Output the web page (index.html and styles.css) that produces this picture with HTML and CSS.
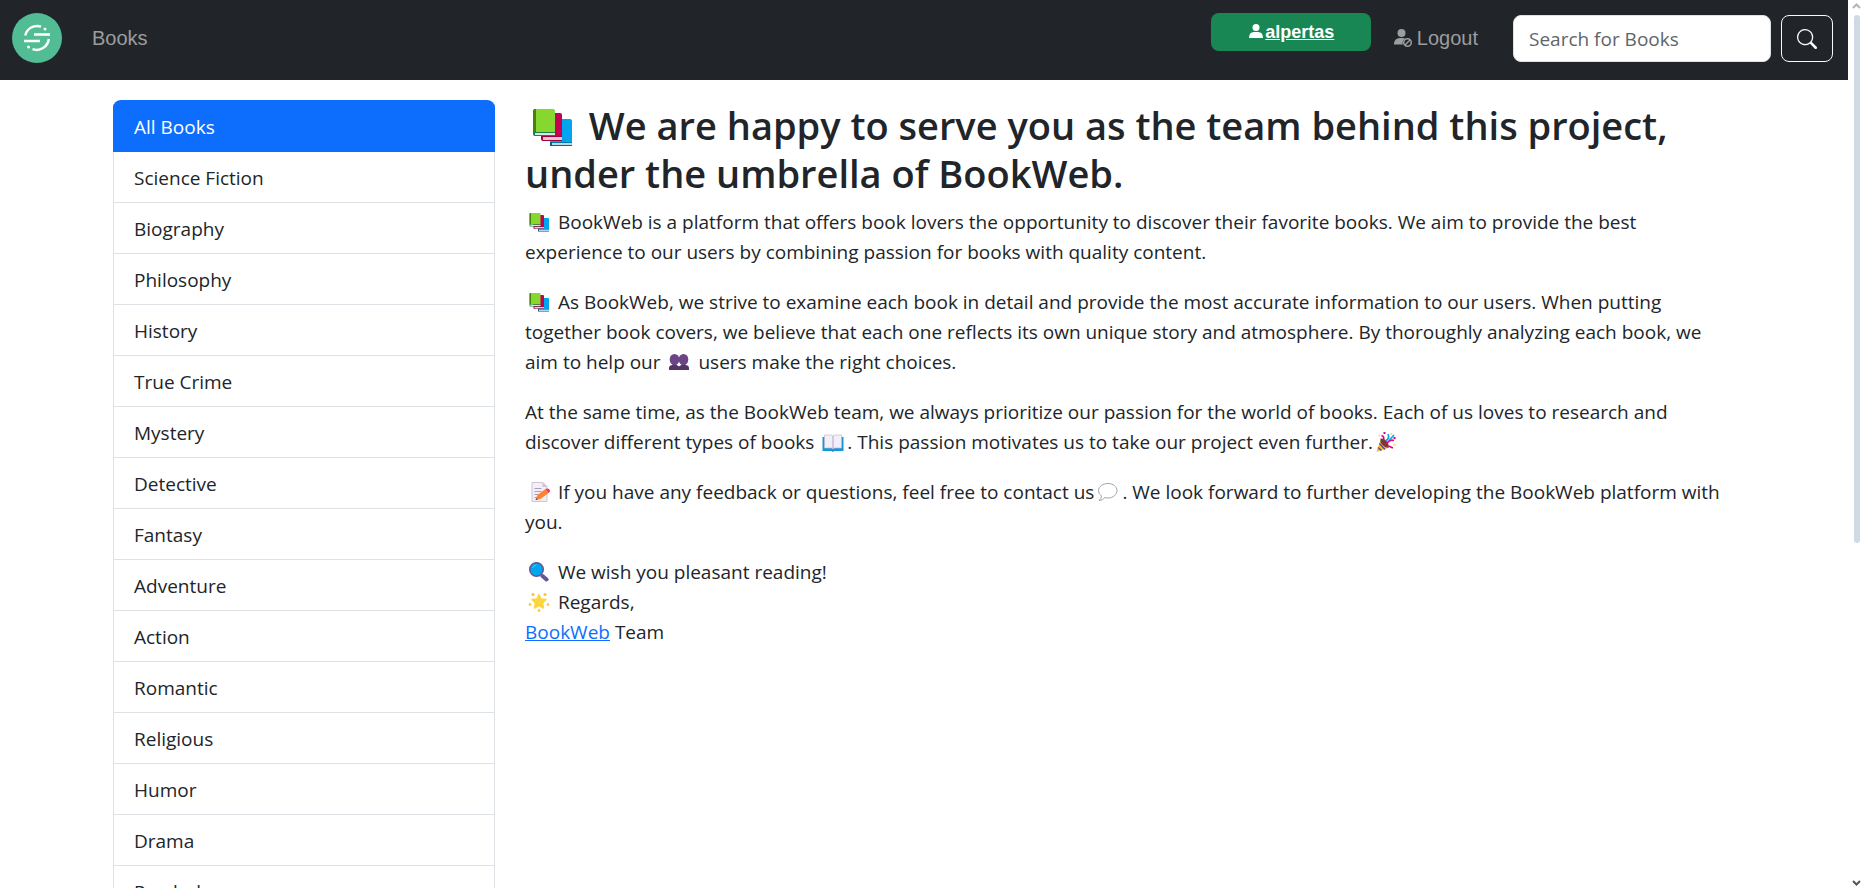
FILE: index.html
```html
<!DOCTYPE html>
<html lang="en">
<head>
<meta charset="utf-8">
<title>BookWeb</title>
<link rel="stylesheet" href="styles.css">
</head>
<body>
<svg class="defs" aria-hidden="true">
  <symbol id="books" viewBox="0 0 54 40">
    <path fill="#0078b8" d="M25 14h3v24h-3z"/><path fill="#00a4ef" d="M27 12h18q2 0 2 2v21H25V14q0-2 2-2z"/>
    <path fill="#0078a8" d="M25 35h22v1H25z"/><path fill="#b8d8e8" d="M27 36h20v3H27z"/><path fill="#0063a0" d="M25 35h2v4h-2zM27 38h20v1H27z"/>
    <path fill="#c30052" d="M18 6h17q2 0 2 2v22H16V8q0-2 2-2z"/><path fill="#e3c6d4" d="M18 30h19v3H18z"/><path fill="#a4003f" d="M16 29h21v1H16zM16 30h2v3h19v1H18q-2 0-2-2z"/>
    <path fill="#86d72f" d="M10 2h18q2 0 2 2v21H8V4q0-2 2-2z"/><path fill="#498205" d="M9 2h2v23H8V4z"/><path fill="#d5eadb" d="M10 26h20v2H10z"/><path fill="#1b7d50" d="M8 25h22v1H10v2h20v1H10q-2 0-2-2z"/>
  </symbol>
  <symbol id="users" viewBox="0 0 27 20">
    <g fill="#6b4588"><ellipse cx="9" cy="7.500" rx="4.800" ry="5.600"/><ellipse cx="18" cy="7.500" rx="4.800" ry="5.600"/><path d="M7 10h4v5H7zM16 10h4v5h-4z"/></g>
    <path fill="#533566" d="M3.500 18v-2q0-3 4-3h3q2 0 3 1.500 1-1.500 3-1.500h3q4 0 4 3v2z"/>
  </symbol>
  <symbol id="open-book" viewBox="0 0 27 20">
    <path fill="#1597d8" d="M3 5h21v14H15l-1.500 1L12 19H3z"/><path fill="#f3eef8" stroke="#c5b8cf" stroke-width=".7" d="M5 3h7l1.500 1L15 3h7v13h-7l-1.500 1-1.500-1H5z"/><path stroke="#b4a5c0" d="M13.500 4v13"/>
  </symbol>
  <symbol id="party" viewBox="0 0 27 20">
    <path fill="#fcb831" d="M6.500 9l8 7L3 20z"/><path stroke="#5b4fa0" stroke-width="1.600" d="M6 11.500l5.500 6M4.500 15.500l3.500 3"/><path fill="#7a3b2e" d="M7 6.500q4-.5 6.500 3t1.500 6.500q-4-.5-6.500-3.500T7 6.500z"/>
    <g fill="none" stroke="#e3008c" stroke-width="1.700"><path d="M10 7.500q1-3-2-4M13.500 11q3-4 7-2.500M15 14l4.500 2"/></g><path fill="none" stroke="#18a8e0" stroke-width="1.800" d="M12.500 8.500q4-2 2-6.500M16 8l4.500-5"/>
    <path fill="#fcd53f" d="M17 1h1.500v1.500H17zM20 12h2v1.500h-2zM5 3h1.500v1.500H5z"/><path fill="#e3008c" d="M20 5h2v2h-2zM10 0h2v2h-2z"/>
  </symbol>
  <symbol id="memo" viewBox="0 0 27 20">
    <path fill="#f3eef8" stroke="#cdc4d6" d="M6.500.5h11l4 4v15h-15z"/><path fill="#cdc4d6" d="M17 0l5 5h-5z"/><path stroke="#aba0ba" d="M9 6.500h7M9 9.500h7M9 12.500h5M9 15.500h3"/>
    <path fill="#ff822d" d="M10 18l2-5 8-6 3 4-8 6z"/><path fill="#f92f60" d="M20 7l1.500-.5q3 0 3 3L23 11z"/><path fill="#7d4533" d="M10 18l1-2 1.500 1.500z"/>
  </symbol>
  <symbol id="speech" viewBox="0 0 27 20">
    <path fill="#fff" stroke="#999" stroke-width=".9" d="M13.500 1.500c5 0 9 3 9 7s-4 7.500-9 7.500q-1.500 0-3-.5Q8 18.500 4.500 18.500 7 16.500 7 14q-3-2-3-5.500c0-4 4.500-7 9.500-7z"/>
  </symbol>
  <symbol id="magnifier" viewBox="0 0 27 20">
    <path stroke="#635994" stroke-width="4" stroke-linecap="round" d="M17 14l4 3.500"/><circle cx="11" cy="7.500" r="6.800" fill="#00a6ed" stroke="#635994" stroke-width="1.500"/><path fill="none" stroke="#45c8ff" d="M7 6q1-3 4-3"/>
  </symbol>
  <symbol id="star" viewBox="0 0 27 20">
    <path fill="#fcd53f" stroke="#fcd53f" stroke-width="1.500" stroke-linejoin="round" d="M13.500 2.500l2 4.500 5 .5-3.500 3.500 1 5-4.500-2.500L9 16l1-5-3.500-3.500 5-.5z"/>
    <g fill="#ffc02e"><circle cx="7.500" cy="2.500" r="1.500"/><circle cx="19.500" cy="2.500" r="1.500"/><circle cx="4.500" cy="12.500" r="1.300"/><circle cx="22.500" cy="12.500" r="1.300"/><circle cx="13.500" cy="18.500" r="1.300"/></g>
  </symbol>
</svg>

<div class="page">
  <header class="navbar">
    <a class="brand" href="#" aria-label="BookWeb home">
      <svg viewBox="0 0 50 50" width="50" height="50">
        <circle cx="25" cy="25" r="25" fill="#52bd95"/>
        <g fill="none" stroke="#fff" stroke-width="2.400"><path d="M13.200 22.500A12.300 12.300 0 0 1 29 13.600M36.800 26A12.300 12.300 0 0 1 20.500 36.200"/><path d="M22 21.500h16M12 28h16"/></g>
        <circle cx="33" cy="16" r="1.500" fill="#fff"/><circle cx="16.500" cy="34" r="1.500" fill="#fff"/>
      </svg>
    </a>
    <nav class="links"><a class="nav-link" href="#">Books</a></nav>
    <a class="user" href="#">
      <svg viewBox="0 0 14 14" width="14" height="14" fill="#fff"><circle cx="7" cy="3.500" r="3.500"/><path d="M0 14q0-6 5-6h4q5 0 5 6z"/></svg><span class="user-name">alpertas</span>
    </a>
    <a class="nav-link logout" href="#">
      <svg viewBox="0 0 20 20" width="20" height="20"><g fill="#9b9d9e"><circle cx="8.500" cy="5" r="4"/><path d="M1 16.500q0-6.500 6-6.500h3q1.500 0 2 .4Q9 12.500 9.800 16.500z"/></g><g fill="none" stroke="#9b9d9e" stroke-width="1.500"><circle cx="14.500" cy="14.500" r="3.800"/><path d="M12 17l5-5"/></g></svg>
      Logout
    </a>
    <form class="search">
      <input class="search-box" type="search" placeholder="Search for Books" aria-label="Search for Books">
      <button class="search-button" type="button" aria-label="Search">
        <svg viewBox="0 0 16 16" width="20" height="20" fill="#f8f9fa"><path d="M11.742 10.344a6.500 6.500 0 1 0-1.397 1.398h-.001q.044.06.098.115l3.850 3.850a1 1 0 0 0 1.415-1.414l-3.850-3.850a1 1 0 0 0-.115-.1zM12 6.500a5.500 5.500 0 1 1-11 0 5.500 5.500 0 0 1 11 0"/></svg>
      </button>
    </form>
  </header>

  <div class="container">
    <nav class="genres" aria-label="Genres">
      <a class="genre active" href="#">All Books</a>
      <a class="genre" href="#">Science Fiction</a>
      <a class="genre" href="#">Biography</a>
      <a class="genre" href="#">Philosophy</a>
      <a class="genre" href="#">History</a>
      <a class="genre" href="#">True Crime</a>
      <a class="genre" href="#">Mystery</a>
      <a class="genre" href="#">Detective</a>
      <a class="genre" href="#">Fantasy</a>
      <a class="genre" href="#">Adventure</a>
      <a class="genre" href="#">Action</a>
      <a class="genre" href="#">Romantic</a>
      <a class="genre" href="#">Religious</a>
      <a class="genre" href="#">Humor</a>
      <a class="genre" href="#">Drama</a>
      <a class="genre" href="#">Psychology</a>
    </nav>
    <main class="about">
      <h1 class="title"><svg class="emoji-large"><use href="#books"/></svg> We are happy to serve you as the team behind this project, under the umbrella of BookWeb.</h1>
      <p class="text"><svg class="emoji"><use href="#books"/></svg> BookWeb is a platform that offers book lovers the opportunity to discover their favorite books. We aim to provide the best experience to our users by combining passion for books with quality content.</p>
      <p class="text"><svg class="emoji"><use href="#books"/></svg> As BookWeb, we strive to examine each book in detail and provide the most accurate information to our users. When putting together book covers, we believe that each one reflects its own unique story and atmosphere. By thoroughly analyzing each book, we aim to help our <svg class="emoji"><use href="#users"/></svg> users make the right choices.</p>
      <p class="text">At the same time, as the BookWeb team, we always prioritize our passion for the world of books. Each of us loves to research and discover different types of books <svg class="emoji"><use href="#open-book"/></svg>. This passion motivates us to take our project even further.<svg class="emoji"><use href="#party"/></svg></p>
      <p class="text"><svg class="emoji"><use href="#memo"/></svg> If you have any feedback or questions, feel free to contact us<svg class="emoji"><use href="#speech"/></svg>. We look forward to further developing the BookWeb platform with you.</p>
      <p class="text"><svg class="emoji"><use href="#magnifier"/></svg> We wish you pleasant reading!<br><svg class="emoji"><use href="#star"/></svg> Regards,<br><a class="team-link" href="#">BookWeb</a> Team</p>
    </main>
  </div>
</div>

<div class="scrollbar" aria-hidden="true">
  <svg viewBox="0 0 9 6" width="9" height="6"><path fill="none" stroke="#b5b5b5" stroke-width="2" d="M1 5l3.500-3.500L8 5"/></svg>
  <span class="thumb"></span>
  <svg viewBox="0 0 9 6" width="9" height="6"><path fill="none" stroke="#555" stroke-width="2" d="M1 1l3.500 3.500L8 1"/></svg>
</div>
</body>
</html>
```
FILE: styles.css
```css
* { box-sizing: border-box; }

body {
  display: flex;
  height: 100vh;
  margin: 0;
  overflow: hidden;
  background: #fff;
  color: #212529;
  font-family: "Open Sans", "Noto Sans", sans-serif;
  font-size: 19px;
  line-height: 30px;
}

.defs { position: absolute; width: 0; height: 0; }

.page { flex: 1; min-width: 0; }

.navbar {
  display: flex;
  align-items: flex-start;
  height: 80px;
  padding: 13px 15px 0 12px;
  background: #212529;
  font-family: "Liberation Sans", Arial, sans-serif;
  font-size: 20px;
}

.brand { display: block; height: 50px; }
.brand svg { display: block; }

.links { flex: 1; padding-left: 30px; }

.nav-link {
  display: flex;
  align-items: center;
  gap: 4px;
  height: 50px;
  color: #9b9d9e;
  text-decoration: none;
}

.user {
  display: flex;
  align-items: center;
  justify-content: center;
  gap: 2px;
  width: 160px;
  height: 38px;
  padding-left: 2px;
  border-radius: 8px;
  background: #198754;
  color: #fff;
  font-size: 18px;
  font-weight: bold;
  text-decoration: none;
}

.user svg { margin-bottom: 2px; }

.user-name { text-decoration: underline; }

.logout { padding: 0 35px 0 22px; }

.search {
  display: flex;
  gap: 10px;
  padding-top: 2px;
}

.search-box {
  width: 258px;
  height: 47px;
  padding: 0 15px;
  border: 1px solid #dee2e6;
  border-radius: 8px;
  background: #fff;
  color: #212529;
  font-family: "Open Sans", "Noto Sans", sans-serif;
  font-size: 19px;
}

.search-box::placeholder { color: #5f6469; opacity: 1; }

.search-button {
  display: flex;
  align-items: center;
  justify-content: center;
  width: 52px;
  height: 47px;
  padding: 0;
  border: 1px solid #f8f9fa;
  border-radius: 8px;
  background: transparent;
}

.container {
  display: flex;
  gap: 30px;
  max-width: 1652px;
  margin: 0 auto;
  padding: 20px 15px;
}

.genres {
  flex: 0 0 382px;
  align-self: flex-start;
  border-radius: 8px;
  overflow: hidden;
}

.genre {
  display: block;
  height: 51px;
  padding: 11px 20px 9px;
  border: 1px solid #dee2e6;
  border-top: 0;
  color: #212529;
  text-decoration: none;
}

.genre.active {
  height: 52px;
  padding-top: 12px;
  border-color: #0d6efd;
  background: #0d6efd;
  color: #fff;
}

.about { flex: 1; min-width: 0; padding: 1px 12px 0 0; }

.title {
  margin: 0 0 10px;
  font-size: 38px;
  font-weight: 600;
  line-height: 48px;
}

.text { margin: 0 0 20px; }

.emoji {
  width: 28px;
  height: 20px;
  vertical-align: -3px;
}

.emoji-large {
  width: 54px;
  height: 40px;
  vertical-align: -7px;
}

.team-link { color: #0d6efd; }

.scrollbar {
  display: flex;
  flex-direction: column;
  align-items: center;
  width: 17px;
  padding: 3px 0 2px;
}

.thumb {
  width: 6px;
  height: 528px;
  margin: 6px 0 auto;
  border-radius: 3px;
  background: #d0dae3;
}
```
